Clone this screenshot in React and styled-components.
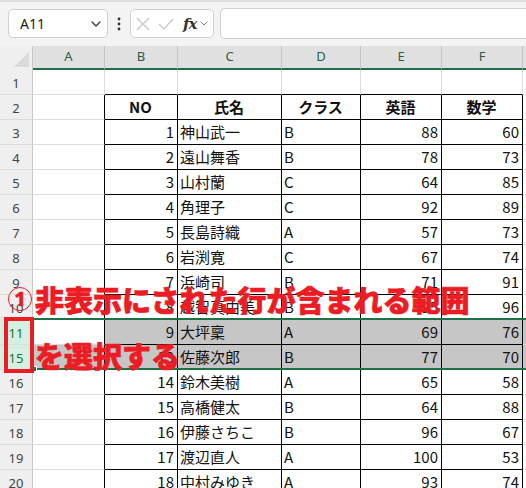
import React from "react";
import styled, { createGlobalStyle } from "styled-components";

const GlobalStyle = createGlobalStyle`
  html, body { margin: 0; padding: 0; background: #fff; }
  body { font-family: "Noto Sans", "Noto Sans CJK JP", sans-serif; overflow: hidden; }
  * { box-sizing: border-box; }
`;

const GREEN = "#1e7145";
const GRID = "#dcdcdc";
const BLACK = "#000";
const SEL = "#c6c6c6";
const RED = "#ec1c24";

const Page = styled.div`
  position: relative;
  width: 526px;
  height: 488px;
  overflow: hidden;
  background: #fff;
`;

const Toolbar = styled.div`
  height: 46px;
  background: #f3f3f3;
  border-top: 2px solid #dedede;
  padding-top: 7px;
  display: flex;
  align-items: flex-start;
`;

const NameBox = styled.div`
  margin-left: 8px;
  width: 100px;
  height: 29px;
  background: #fff;
  border: 1px solid #d0d0d0;
  border-radius: 5px;
  display: flex;
  align-items: center;
  justify-content: space-between;
  padding: 0 6px 0 11px;
  font-size: 14px;
  color: #222;
  flex: none;
`;

const Dots = styled.div`
  width: 22px;
  height: 29px;
  display: flex;
  align-items: center;
  justify-content: center;
  flex: none;
`;

const FxBox = styled.div`
  width: 84px;
  height: 29px;
  background: #fff;
  border: 1px solid #d0d0d0;
  border-radius: 5px;
  display: flex;
  align-items: center;
  padding-left: 5px;
  flex: none;
`;

const Spacer = styled.span`
  width: ${(p) => p.$w}px;
  flex: none;
`;

const FxLabel = styled.span`
  font-family: "DejaVu Serif", "Liberation Serif", serif;
  font-style: italic;
  font-weight: 600;
  font-size: 15px;
  color: #333;
  margin-left: 9px;
  letter-spacing: -1px;
`;

const FormulaInput = styled.div`
  flex: 1;
  margin-left: 6px;
  height: 31px;
  margin-top: -1px;
  background: #fff;
  border: 1px solid #d0d0d0;
  border-right: none;
  border-radius: 5px 0 0 5px;
`;

const Row = styled.div`
  display: flex;
  height: ${(p) => p.$h || 25}px;
`;

const Corner = styled.div`
  position: relative;
  width: 33px;
  height: 24px;
  flex: none;
  background: #efefef;
  border-right: 1px solid #c8c8c8;
  overflow: hidden;
`;

const ColHead = styled.div`
  width: ${(p) => p.$w}px;
  flex: none;
  height: 24px;
  background: #e0e0e0;
  border-right: 1px solid #c4c4c4;
  border-bottom: 2px solid ${GREEN};
  display: flex;
  align-items: center;
  justify-content: center;
  font-size: 13px;
  color: #2a5e45;
  padding-bottom: 2px;
`;

const RowHead = styled.div`
  width: 33px;
  flex: none;
  background: ${(p) => (p.$sel ? "#d3f0e0" : "#efefef")};
  color: ${(p) => (p.$sel ? "#187041" : "#444")};
  border-right: 1px solid ${(p) => (p.$sel ? GREEN : "#c8c8c8")};
  border-bottom: 1px solid ${GRID};
  display: flex;
  align-items: center;
  justify-content: center;
  font-size: 13px;
  padding-top: 1px;
`;

const Cell = styled.div`
  width: ${(p) => p.$w}px;
  flex: none;
  background: ${(p) => p.$bg || "#fff"};
  border-right: 1px solid ${(p) => p.$rb};
  border-bottom: 1px solid ${(p) => p.$bb};
  font-family: "Noto Sans CJK JP", "Noto Sans", sans-serif;
  font-size: 15px;
  line-height: 24px;
  font-weight: ${(p) => (p.$bold ? 700 : 400)};
  color: #111;
  text-align: ${(p) => p.$align || "left"};
  padding: 0 3px 0 2px;
  white-space: nowrap;
  overflow: hidden;
`;

const SelectionFrame = styled.div`
  position: absolute;
  left: 33px;
  right: 0;
  top: 318px;
  height: 52px;
  border-top: 2px solid ${GREEN};
  border-bottom: 2px solid ${GREEN};
  pointer-events: none;
`;

const FillHandle = styled.div`
  position: absolute;
  left: 31px;
  top: 366px;
  width: 6px;
  height: 6px;
  background: ${GREEN};
  border: 1px solid #fff;
`;

const RedBox = styled.div`
  position: absolute;
  left: 4px;
  top: 317px;
  width: 30px;
  height: 56px;
  border: 4px solid ${RED};
`;

const Callout = styled.div`
  position: absolute;
  left: 8px;
  top: 280px;
  font-family: "Noto Sans CJK JP", sans-serif;
  font-weight: 900;
  font-size: 29px;
  line-height: 38px;
  color: ${RED};
  -webkit-text-stroke: 0.7px ${RED};
  white-space: nowrap;
  pointer-events: none;
`;

const CalloutLine = styled.div`
  display: flex;
  align-items: center;
  padding-left: ${(p) => p.$indent || 0}px;
  margin-top: ${(p) => p.$gap || 0}px;
`;

const Circled = styled.span`
  display: inline-flex;
  align-items: center;
  justify-content: center;
  width: 24px;
  height: 24px;
  margin-right: 3px;
  border: 1.2px solid ${RED};
  border-radius: 50%;
  font-family: "Noto Sans", sans-serif;
  font-size: 20px;
  line-height: 1;
  font-weight: 800;
  -webkit-text-stroke: 0.4px ${RED};
  padding-bottom: 1px;
`;

const COLS = [72, 73, 104, 79, 81, 81, 81];
const LETTERS = ["A", "B", "C", "D", "E", "F", "G"];

const DATA = [
  { r: 1, v: null },
  { r: 2, v: ["NO", "氏名", "クラス", "英語", "数学"], head: true },
  { r: 3, v: [1, "神山武一", "B", 88, 60] },
  { r: 4, v: [2, "遠山舞香", "B", 78, 73] },
  { r: 5, v: [3, "山村蘭", "C", 64, 85] },
  { r: 6, v: [4, "角理子", "C", 92, 89] },
  { r: 7, v: [5, "長島詩織", "A", 57, 73] },
  { r: 8, v: [6, "岩渕寛", "C", 67, 74] },
  { r: 9, v: [7, "浜崎司", "B", 71, 91] },
  { r: 10, v: [8, "越智真由美", "B", 95, 96] },
  { r: 11, v: [9, "大坪稟", "A", 69, 76], sel: true, active: true },
  { r: 15, v: [13, "佐藤次郎", "B", 77, 70], sel: true },
  { r: 16, v: [14, "鈴木美樹", "A", 65, 58] },
  { r: 17, v: [15, "高橋健太", "B", 64, 88] },
  { r: 18, v: [16, "伊藤さちこ", "B", 96, 67] },
  { r: 19, v: [17, "渡辺直人", "A", 100, 53] },
  { r: 20, v: [18, "中村みゆき", "A", 93, 74] },
];

function ChevronDown({ size = 10, color = "#444" }) {
  return (
    <svg width={size} height={size * 0.6} viewBox="0 0 10 6">
      <path d="M1 1 L5 5 L9 1" fill="none" stroke={color} strokeWidth="1.2" strokeLinecap="round" strokeLinejoin="round" />
    </svg>
  );
}

function VDots() {
  return (
    <svg width="4" height="14" viewBox="0 0 4 14">
      <circle cx="2" cy="2" r="1.4" fill="#333" />
      <circle cx="2" cy="7" r="1.4" fill="#333" />
      <circle cx="2" cy="12" r="1.4" fill="#333" />
    </svg>
  );
}

function XIcon() {
  return (
    <svg width="14" height="14" viewBox="0 0 14 14">
      <path d="M1 1 L13 13 M13 1 L1 13" stroke="#c4c4c4" strokeWidth="1.2" fill="none" />
    </svg>
  );
}

function CheckIcon() {
  return (
    <svg width="16" height="14" viewBox="0 0 16 14">
      <path d="M1 7 L6 12 L15 2" stroke="#c4c4c4" strokeWidth="1.2" fill="none" />
    </svg>
  );
}

function DataRow({ row }) {
  const { r, v, head, sel, active } = row;
  return (
    <Row>
      <RowHead $sel={sel}>{r}</RowHead>
      {COLS.map((w, c) => {
        const inTable = c >= 1 && c <= 5;
        const rb = r >= 2 && c <= 5 ? BLACK : GRID;
        const bb = r >= 1 && inTable ? BLACK : GRID;
        let bg = "#fff";
        if (sel && !(active && c === 0)) bg = SEL;
        let content = null;
        let align = "left";
        if (v && inTable) {
          const val = v[c - 1];
          content = val;
          if (head) align = "center";
          else if (typeof val === "number") align = "right";
        }
        return (
          <Cell key={c} $w={w} $rb={rb} $bb={bb} $bg={bg} $bold={head} $align={align}>
            {content}
          </Cell>
        );
      })}
    </Row>
  );
}

export default function App() {
  return (
    <Page>
      <GlobalStyle />
      <Toolbar>
        <NameBox>
          <span>A11</span>
          <ChevronDown size={10} color="#333" />
        </NameBox>
        <Dots>
          <VDots />
        </Dots>
        <FxBox>
          <XIcon />
          <Spacer $w={8} />
          <CheckIcon />
          <FxLabel>fx</FxLabel>
          <Spacer $w={4} />
          <ChevronDown size={8} color="#777" />
        </FxBox>
        <FormulaInput />
      </Toolbar>
      <Row $h={24}>
        <Corner>
          <svg width="33" height="24" style={{ position: "absolute", left: 0, top: 0 }}>
            <polygon points="29,6 29,21 14,21" fill="#dadada" />
          </svg>
        </Corner>
        {COLS.map((w, c) => (
          <ColHead key={c} $w={w}>
            {LETTERS[c]}
          </ColHead>
        ))}
      </Row>
      {DATA.map((row) => (
        <DataRow key={row.r} row={row} />
      ))}
      <SelectionFrame />
      <FillHandle />
      <RedBox />
      <Callout>
        <CalloutLine>
          <Circled>1</Circled>非表示にされた行が含まれる範囲
        </CalloutLine>
        <CalloutLine $indent={27} $gap={18}>
          を選択する
        </CalloutLine>
      </Callout>
    </Page>
  );
}
